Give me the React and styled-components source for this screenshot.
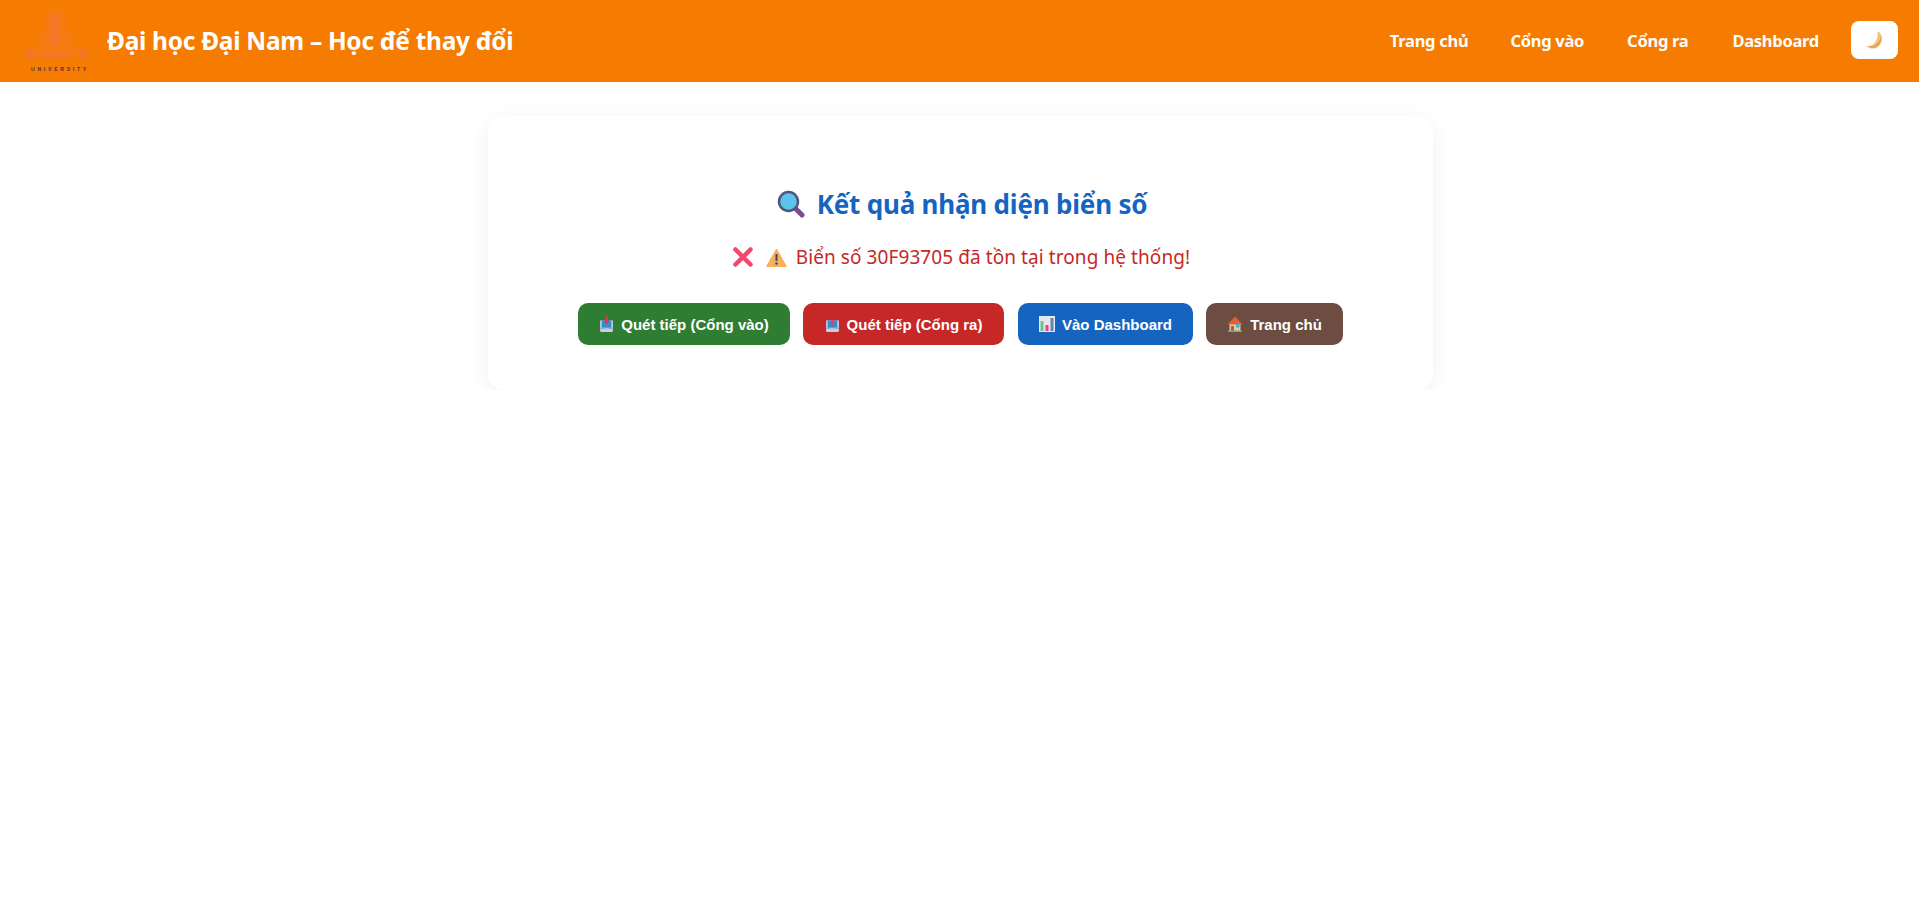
import React from 'react';
import styled, { createGlobalStyle } from 'styled-components';

const GlobalStyle = createGlobalStyle`
  html, body {
    margin: 0;
    padding: 0;
    background: #fff;
    font-family: "Noto Sans", "Open Sans", sans-serif;
  }
`;

const Header = styled.header`
  display: flex;
  align-items: center;
  justify-content: space-between;
  box-sizing: border-box;
  height: 82px;
  padding: 0 21px 2px 23px;
  background: #f57c00;
`;

const Brand = styled.div`
  display: flex;
  align-items: center;
  gap: 17px;
`;

const LogoBox = styled.div`
  position: relative;
  width: 67px;
  height: 66px;
`;

const LogoText = styled.span`
  position: absolute;
  left: 8px;
  bottom: 0;
  font-family: "Liberation Sans", sans-serif;
  font-size: 5px;
  font-weight: 700;
  letter-spacing: 2.8px;
  line-height: 7px;
  color: #3f3560;
`;

const Title = styled.h1`
  margin: 0;
  font-size: 24.5px;
  font-weight: 700;
  color: #fff;
  letter-spacing: -0.3px;
`;

const Nav = styled.nav`
  display: flex;
  align-items: center;
`;

const NavLink = styled.a`
  margin-right: ${(props) => props.$gap}px;
  font-size: 16.5px;
  font-weight: 700;
  color: #fff;
  letter-spacing: -0.28px;
  text-decoration: none;
`;

const ThemeBtn = styled.button`
  display: flex;
  align-items: center;
  justify-content: center;
  width: 47px;
  height: 38px;
  padding: 0;
  border: none;
  border-radius: 8px;
  background: #fff;
`;

const Card = styled.main`
  width: 945px;
  height: 274px;
  box-sizing: border-box;
  margin: 34px 486px 0 488px;
  padding-top: 71px;
  border-radius: 16px;
  background: #fff;
  box-shadow: 0 5px 22px rgba(0, 0, 0, 0.06);
  text-align: center;
`;

const Heading = styled.h2`
  display: flex;
  align-items: center;
  justify-content: center;
  gap: 12px;
  height: 34px;
  margin: 0;
  padding-left: 3px;
  font-size: 26px;
  font-weight: 700;
  color: #1565c0;
  letter-spacing: -0.2px;
`;

const Message = styled.p`
  display: flex;
  align-items: center;
  justify-content: center;
  height: 26px;
  margin: 23px 0 0;
  padding-left: 1px;
  font-size: 19px;
  color: #c62828;
  letter-spacing: 0.08px;
`;

const IconSlot = styled.span`
  display: inline-flex;
  margin-right: ${(props) => props.$gap}px;
`;

const Actions = styled.div`
  display: flex;
  justify-content: center;
  gap: 13px;
  margin-top: 33px;
`;

const ActionBtn = styled.a`
  display: flex;
  align-items: center;
  justify-content: center;
  gap: 7px;
  width: ${(props) => props.$width}px;
  height: 42px;
  margin-left: ${(props) => props.$push || 0}px;
  border-radius: 10px;
  background: ${(props) => props.$bg};
  font-family: "Liberation Sans", Arial, sans-serif;
  font-size: 15px;
  font-weight: 700;
  color: #fff;
  text-decoration: none;
`;

const Logo = () => (
  <svg width="67" height="58" viewBox="0 0 67 58">
    <g fill="#f57a2c" opacity="0.4">
      <rect x="24" y="2" width="16" height="9" />
      <rect x="20" y="11" width="24" height="14" />
      <rect x="16" y="25" width="32" height="14" />
      <rect x="4" y="39" width="58" height="13" />
    </g>
    <g fill="#f2743a" opacity="0.55">
      <rect x="27" y="8" width="10" height="30" />
      <rect x="2" y="43" width="8" height="9" />
      <rect x="56" y="43" width="8" height="9" />
      <rect x="20" y="45" width="24" height="6" />
    </g>
  </svg>
);

const Moon = () => (
  <svg width="20" height="20" viewBox="0 0 20 20">
    <path d="M12.500 1c5 2.500 6.500 11 .5 16-3.500 2.500-8.500 2-11.500-1 5 .5 7.500-1.500 9.500-5 1.500-3.500 2-6.500 1.500-10z" fill="#f5c27c" />
    <path d="M16.500 6c.5 5-2 10-6.500 11.500-3 1-6 0-8.500-1.500 4 1 7 .5 10-2 2.500-2 4-5 5-8z" fill="#ea9f50" />
  </svg>
);

const Magnifier = () => (
  <svg width="28" height="28" viewBox="0 0 28 28">
    <path d="M18 18l7 7" stroke="#7d4b92" strokeWidth="5" strokeLinecap="round" />
    <circle cx="11.500" cy="11.500" r="9.500" fill="#5cc3ea" stroke="#54557d" strokeWidth="2.500" />
  </svg>
);

const Cross = () => (
  <svg width="22" height="22" viewBox="0 0 22 22">
    <path d="M3.500 3.500l15 15M18.500 3.500l-15 15" stroke="#f4476b" strokeWidth="4.500" strokeLinecap="round" />
  </svg>
);

const Warning = () => (
  <svg width="21" height="19" viewBox="0 0 21 19">
    <path d="M10.500 1L20.500 18.500H.5z" fill="#f9b05a" strokeLinejoin="round" stroke="#f9b05a" />
    <path d="M10.500 6v7" stroke="#4b4550" strokeWidth="2" />
    <circle cx="10.500" cy="15.500" r="1.200" fill="#4b4550" />
  </svg>
);

const Tray = ({ arrow }) => (
  <svg width="15" height="16" viewBox="0 0 14 15">
    <rect x="1" y="4" width="12" height="11" rx="1" fill="#c9cfe0" />
    <rect x="2.500" y="4" width="9" height="7" fill="#2f8fd0" />
    <path d="M1 11h4l1 1.500h2L9 11h4v1H1z" fill="#8f9cc0" />
    {arrow && <path d="M6 0h2v4h2L7 8 4 4h2z" fill="#e0345c" />}
    {!arrow && <path d="M7 3l3 3H8v3H6V6H4z" fill="#d8456f" />}
  </svg>
);

const Chart = () => (
  <svg width="16" height="16" viewBox="0 0 16 16">
    <rect width="16" height="16" fill="#e4e6f0" />
    <rect x="1.500" y="5" width="3" height="10" fill="#6fc28a" />
    <rect x="6.500" y="9" width="3" height="6" fill="#ef3f7e" />
    <rect x="11.500" y="2" width="3" height="13" fill="#5d86b8" />
  </svg>
);

const House = () => (
  <svg width="16" height="16" viewBox="0 0 16 16">
    <rect x="2.500" y="7" width="11" height="8" fill="#f2c39c" />
    <path d="M8 .5L15.500 8.500H.5z" fill="#e2603a" />
    <rect x="9" y="8" width="3.500" height="3.500" fill="#3fb6d8" />
    <rect x="4" y="10" width="3" height="5" fill="#a8623c" />
    <rect x="1" y="14.500" width="14" height="1.500" fill="#5cb88a" />
  </svg>
);

const App = () => (
  <>
    <GlobalStyle />
    <Header>
      <Brand>
        <LogoBox>
          <Logo />
          <LogoText>UNIVERSITY</LogoText>
        </LogoBox>
        <Title>Đại học Đại Nam – Học để thay đổi</Title>
      </Brand>
      <Nav>
        <NavLink href="#" $gap={42}>Trang chủ</NavLink>
        <NavLink href="#" $gap={43}>Cổng vào</NavLink>
        <NavLink href="#" $gap={44}>Cổng ra</NavLink>
        <NavLink href="#" $gap={32}>Dashboard</NavLink>
        <ThemeBtn type="button"><Moon /></ThemeBtn>
      </Nav>
    </Header>
    <Card>
      <Heading><Magnifier />Kết quả nhận diện biển số</Heading>
      <Message>
        <IconSlot $gap={12}><Cross /></IconSlot>
        <IconSlot $gap={9}><Warning /></IconSlot>
        Biển số 30F93705 đã tồn tại trong hệ thống!
      </Message>
      <Actions>
        <ActionBtn href="#" $width={212} $bg="#2e7d32"><Tray arrow />Quét tiếp (Cổng vào)</ActionBtn>
        <ActionBtn href="#" $width={201} $bg="#c62828"><Tray />Quét tiếp (Cổng ra)</ActionBtn>
        <ActionBtn href="#" $width={175} $push={1} $bg="#1565c0"><Chart />Vào Dashboard</ActionBtn>
        <ActionBtn href="#" $width={137} $bg="#6d4c41"><House />Trang chủ</ActionBtn>
      </Actions>
    </Card>
  </>
);

export default App;
